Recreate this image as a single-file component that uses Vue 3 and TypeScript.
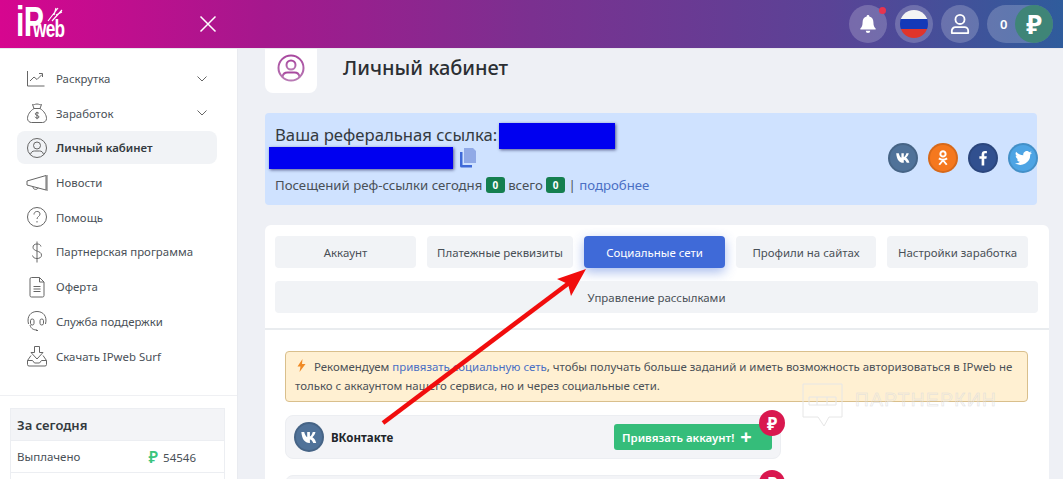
<script setup lang="ts">
const menu = [
  { label: 'Раскрутка', icon: 'chart', arrow: true },
  { label: 'Заработок', icon: 'bag', arrow: true },
  { label: 'Личный кабинет', icon: 'user', active: true },
  { label: 'Новости', icon: 'horn' },
  { label: 'Помощь', icon: 'help' },
  { label: 'Партнерская программа', icon: 'dollar' },
  { label: 'Оферта', icon: 'doc' },
  { label: 'Служба поддержки', icon: 'support' },
  { label: 'Скачать IPweb Surf', icon: 'download' },
]

const tabs = ['Аккаунт', 'Платежные реквизиты', 'Социальные сети', 'Профили на сайтах', 'Настройки заработка']
</script>

<template>
  <div class="page">
    <header class="topbar">
      <div class="logo">
        <span class="logo-ip">iP</span><span class="logo-web">web</span>
        <svg class="logo-leaf" width="16" height="16" viewBox="0 0 16 16" fill="none" stroke="#fff" stroke-width="1.200">
          <path d="M1 15L11 2M5 15L15 4M7 9l2-7M9 9l6-3" />
        </svg>
      </div>
      <button class="close" aria-label="Закрыть">
        <svg width="18" height="18" viewBox="0 0 18 18" fill="none" stroke="#fff" stroke-width="1.500">
          <path d="M1.500 1.500l15 15M16.500 1.500l-15 15" />
        </svg>
      </button>
      <div class="top-actions">
        <span class="round">
          <svg width="18" height="20" viewBox="0 0 20 22" fill="#fff">
            <path d="M10 1a1.500 1.500 0 0 1 1.500 1.600C14.600 3.300 16 5.800 16 9c0 4 1 5.500 2.500 7v1h-17v-1C3 14.500 4 13 4 9c0-3.200 1.400-5.700 4.500-6.400A1.500 1.500 0 0 1 10 1zM7.500 18.500h5a2.500 2.500 0 0 1-5 0z" />
          </svg>
          <i class="dot"></i>
        </span>
        <span class="round">
          <span class="flag"><i class="w"></i><i class="b"></i><i class="r"></i></span>
        </span>
        <span class="round">
          <svg width="20" height="22" viewBox="0 0 22 24" fill="none" stroke="#fff" stroke-width="2">
            <circle cx="11" cy="7" r="5" />
            <path d="M2 22v-2.500a4 4 0 0 1 4-4h10a4 4 0 0 1 4 4V22z" stroke-linejoin="round" />
          </svg>
        </span>
        <span class="balance">
          <span class="balance-num">0</span>
          <span class="balance-cur">₽</span>
        </span>
      </div>
    </header>

    <div class="body">
      <aside class="sidebar">
        <nav class="menu">
          <a v-for="item in menu" :key="item.label" class="menu-item" :class="{ active: item.active }">
            <svg class="menu-icon" width="22" height="22" viewBox="0 0 22 22" fill="none" stroke="#666" stroke-width="1">
              <template v-if="item.icon === 'chart'">
                <path d="M1.500 3v15h17" />
                <path d="M4 13l4-4 3 2.500 5-5M13 5.500h3.500V9" />
              </template>
              <template v-else-if="item.icon === 'bag'">
                <path d="M8 6.500L6.500 2.500c1.500.7 2.500-.5 4.500-.5s3 1.200 4.500.5L14 6.500z" />
                <path d="M8 6.500C4 9 1.500 13 1.500 16.500c0 2.500 2 4 4 4h11c2 0 4-1.500 4-4C20.500 13 18 9 14 6.500" />
                <path d="M13 11.500c-.5-1-3.500-1.500-3.700.3-.2 2 3.900 1.200 3.700 3.200-.2 1.700-3.300 1.500-4-.2M11 9.800v7.400" />
              </template>
              <template v-else-if="item.icon === 'user'">
                <circle cx="11" cy="11" r="9.500" />
                <circle cx="11" cy="8.500" r="3.500" />
                <path d="M4.500 17.500c.5-2.500 2-3.500 4-3.500h5c2 0 3.500 1 4 3.500" />
              </template>
              <template v-else-if="item.icon === 'horn'">
                <path d="M1 9v4l19 5V3.500zM21 3v16" />
                <path d="M7 15c0 3 4.500 3 5 .8" />
              </template>
              <template v-else-if="item.icon === 'help'">
                <circle cx="11" cy="11" r="9.500" />
                <path d="M8 8.500c0-4 6-4 6-.5 0 2.500-3 2.500-3 5M11 15v1.500" />
              </template>
              <template v-else-if="item.icon === 'dollar'">
                <path d="M15 5.500C14.500 3.500 13 3 11 3 8.500 3 7 4.300 7 6.200c0 4.800 8.500 3 8.500 8 0 2.200-2 3.300-4.500 3.300-2.300 0-4-1-4.500-3M11 .5v21" />
              </template>
              <template v-else-if="item.icon === 'doc'">
                <path d="M4 3a1.500 1.500 0 0 1 1.500-1.500h8L18 6v13.500a1.500 1.500 0 0 1-1.500 1.500h-11A1.500 1.500 0 0 1 4 19.500zM13.500 1.500V6H18M7.500 10.500h7M7.500 13h7M7.500 15.500h7" />
              </template>
              <template v-else-if="item.icon === 'support'">
                <path d="M2.500 14C.5 6 5 1.500 11 1.500S21.500 6 19.500 14" />
                <rect x="4.500" y="9" width="3.500" height="6" rx="1.700" />
                <rect x="14" y="9" width="3.500" height="6" rx="1.700" />
                <path d="M4 15c1 4 4 5 7 5M12 20.500h-2" />
              </template>
              <template v-else>
                <path d="M8.500 1.500h5v6h3.500L11 14 5 7.500h3.500z" />
                <path d="M5 10.500l-3.500 5v4a1.500 1.500 0 0 0 1.500 1.500h16a1.500 1.500 0 0 0 1.500-1.500v-4l-3.500-5M1.500 15.500h5l2 2.500h5l2-2.500h5" />
              </template>
            </svg>
            <span class="menu-label">{{ item.label }}</span>
            <svg v-if="item.arrow" class="menu-arrow" width="10" height="6" viewBox="0 0 10 6" fill="none" stroke="#666" stroke-width="1">
              <path d="M.5.500L5 5 9.500.5" />
            </svg>
          </a>
        </nav>
        <div class="today">
          <div class="today-head">За сегодня</div>
          <div class="today-row">
            <span>Выплачено</span>
            <span class="today-value"><b>₽</b>54546</span>
          </div>
          <div class="today-row"></div>
        </div>
      </aside>

      <main class="content">
        <div class="title-row">
          <span class="title-icon">
            <svg width="28" height="28" viewBox="0 0 28 28" fill="none" stroke="url(#titleGrad)" stroke-width="2">
              <defs>
                <linearGradient id="titleGrad" x1="0" y1="0" x2="0" y2="1">
                  <stop offset="0" stop-color="#a8489f" />
                  <stop offset="1" stop-color="#b879b4" />
                </linearGradient>
              </defs>
              <circle cx="14" cy="14" r="12.500" />
              <circle cx="14" cy="11" r="4.500" />
              <path d="M5.500 23c.5-3.500 2.500-4.500 5-4.500h7c2.500 0 4.500 1 5 4.500" />
            </svg>
          </span>
          <h1>Личный кабинет</h1>
        </div>

        <section class="ref-card">
          <div class="ref-main">
            <div class="ref-link">Ваша реферальная ссылка: <span class="hidden-a"></span></div>
            <div class="ref-second">
              <span class="hidden-b"></span>
              <svg width="18" height="20" viewBox="0 0 18 20">
                <path d="M5 0h9l3 3v12H5z" fill="#90a9e6" />
                <path d="M1 4h2.500v13H13v2.500H2.500A1.500 1.500 0 0 1 1 18z" fill="#3f6ad8" />
              </svg>
            </div>
            <div class="ref-stats">
              Посещений реф-ссылки сегодня <span class="badge">0</span> всего <span class="badge">0</span> | <a>подробнее</a>
            </div>
          </div>
          <div class="socials">
            <span class="soc vk"><svg width="16" height="10" viewBox="0 0 20 12" fill="#fff"><path d="M0 0h3.200c.6 2.800 2 5 3.300 5.700V0h3v4.800C10.800 4.600 12 2.500 12.700 0h3c-.5 2.700-2.200 4.800-3.400 5.700 1.300.7 3.300 2.700 4.200 6.300h-3.300c-.7-2.200-2.300-3.700-3.700-3.900V12H8.800C4 12 .600 8.300 0 0z" transform="translate(1.500)"/></svg></span>
            <span class="soc ok"><svg width="12" height="18" viewBox="0 0 16 22" fill="none" stroke="#fff" stroke-width="2.600"><circle cx="8" cy="5.500" r="3.500"/><path d="M2.500 11.500c3 2 8 2 11 0M8 13.500V15M8 14l-5 6M8 14l5 6"/></svg></span>
            <span class="soc fb"><svg width="9" height="16" viewBox="0 0 12 20" fill="#fff"><path d="M3.500 20v-9H.5V7.500h3V5c0-3 1.800-4.500 4.400-4.500 1.300 0 2.300.1 2.600.1v3.100H8.700c-1.400 0-1.700.7-1.700 1.700v2.100h3.400l-.5 3.500H7V20z"/></svg></span>
            <span class="soc tw"><svg width="17" height="14" viewBox="0 0 22 18" fill="#fff"><path d="M22 2.100c-.8.400-1.700.6-2.600.7.900-.6 1.600-1.400 2-2.500-.9.500-1.800.9-2.900 1.100A4.500 4.500 0 0 0 10.800 5.500 12.800 12.800 0 0 1 1.500.8a4.500 4.500 0 0 0 1.400 6c-.7 0-1.400-.2-2-.6 0 2.200 1.500 4 3.600 4.500-.7.200-1.300.2-2 .1.600 1.800 2.200 3.100 4.200 3.100A9 9 0 0 1 0 15.800 12.800 12.800 0 0 0 19.700 4.500c.9-.6 1.700-1.400 2.300-2.400z"/></svg></span>
          </div>
        </section>

        <section class="panel">
          <div class="tabs">
            <a v-for="tab in tabs" :key="tab" class="tab" :class="{ current: tab === 'Социальные сети', wide: tab === 'Платежные реквизиты' }">{{ tab }}</a>
            <a class="tab full">Управление рассылками</a>
          </div>
          <div class="panel-body">
            <div class="alert"><svg width="9" height="13" viewBox="0 0 9 13" fill="#f08a24"><path d="M5.500 0L.5 7.500h3L2.500 13l6-8h-3.500z"/></svg>Рекомендуем <a>привязать социальную сеть</a>, чтобы получать больше заданий и иметь возможность авторизоваться в IPweb не только с аккаунтом нашего сервиса, но и через социальные сети.</div>
            <div class="net">
              <span class="soc vk"><svg width="18" height="11" viewBox="0 0 20 12" fill="#fff"><path d="M0 0h3.200c.6 2.800 2 5 3.300 5.700V0h3v4.800C10.800 4.600 12 2.500 12.700 0h3c-.5 2.700-2.200 4.800-3.400 5.700 1.300.7 3.300 2.700 4.200 6.300h-3.300c-.7-2.200-2.300-3.700-3.700-3.900V12H8.800C4 12 .600 8.300 0 0z" transform="translate(1.500)"/></svg></span>
              <b class="net-name">ВКонтакте</b>
              <a class="bind">Привязать аккаунт! <span class="plus">+</span></a>
              <span class="ruble">₽</span>
            </div>
            <div class="net"><span class="ruble">₽</span></div>
          </div>
        </section>
      </main>
    </div>

    <svg class="arrow" width="1063" height="479" viewBox="0 0 1063 479">
      <path d="M383 423L569 283" stroke="#f10d0d" stroke-width="4.500" fill="none" />
      <path d="M586 269L557 279L568 284L571 296z" fill="#f10d0d" />
    </svg>

    <div class="watermark">
      <svg width="41" height="44" viewBox="0 0 41 44" fill="none" stroke="#e6e6e6" stroke-width="1">
        <path d="M1 1h39v33H27l-5 9-6-9H1z" />
        <path d="M7 14h27v8H7zM15 14v8M25 14v8" />
      </svg>
      <span>ПАРТНЕРКИН</span>
    </div>
  </div>
</template>

<style scoped>
.page {
  position: relative;
  width: 1063px;
  height: 479px;
  overflow: hidden;
  background: #eef0f5;
  font-family: "Noto Sans", "Open Sans", sans-serif;
  color: #495057;
}

.topbar {
  height: 48px;
  display: flex;
  align-items: center;
  background: linear-gradient(90deg, #d6068f 0%, #a5188d 25%, #7b3090 50%, #5a4396 78%, #2f5c9c 100%);
  border-bottom: 1px solid #e8e8ee;
  box-sizing: content-box;
}

.logo {
  position: relative;
  width: 199px;
  padding-left: 16px;
  box-sizing: border-box;
  display: flex;
  align-items: flex-end;
  height: 37px;
  margin-top: -5px;
  color: #fff;
  font-family: "Liberation Sans", sans-serif;
  font-weight: 700;
}

.logo-ip {
  font-size: 42px;
  line-height: 37px;
  height: 37px;
  letter-spacing: -1px;
  transform: scaleX(0.72);
  transform-origin: left bottom;
  margin-right: -21px;
}

.logo-web {
  font-size: 24px;
  line-height: 22px;
  letter-spacing: -1px;
  transform: scaleX(0.72);
  transform-origin: left bottom;
}

.logo-leaf {
  position: absolute;
  left: 47px;
  top: 3px;
}

.close {
  padding: 0;
  border: 0;
  background: none;
  display: flex;
}

.top-actions {
  margin-left: auto;
  margin-right: 10px;
  display: flex;
  align-items: center;
  gap: 8px;
}

.round {
  position: relative;
  width: 38px;
  height: 38px;
  border-radius: 50%;
  background: rgba(255, 255, 255, 0.2);
  display: flex;
  align-items: center;
  justify-content: center;
}

.dot {
  position: absolute;
  top: 2px;
  right: 1px;
  width: 7px;
  height: 7px;
  border-radius: 50%;
  background: #e7344f;
}

.flag {
  width: 28px;
  height: 28px;
  border-radius: 50%;
  overflow: hidden;
  display: flex;
  flex-direction: column;
}

.flag i {
  flex: 1;
}

.flag .w { background: #f4f4f4; }
.flag .b { background: #1339b8; }
.flag .r { background: #e0352b; }

.balance {
  width: 66px;
  height: 38px;
  border-radius: 19px;
  background: rgba(255, 255, 255, 0.2);
  display: flex;
  align-items: center;
  justify-content: space-between;
  padding-left: 13px;
  box-sizing: border-box;
  color: #fff;
}

.balance-num {
  font-size: 13px;
  font-weight: 600;
}

.balance-cur {
  width: 38px;
  height: 38px;
  border-radius: 50%;
  background: #3f8577;
  display: flex;
  align-items: center;
  justify-content: center;
  font-size: 26px;
  font-weight: 700;
}

.body {
  display: flex;
}

.sidebar {
  width: 238px;
  height: 431px;
  flex: none;
  background: #fff;
  border-right: 1px solid #e9ebf0;
  box-sizing: border-box;
}

.menu {
  padding: 13px 20px 21px 17px;
  border-bottom: 1px solid #eff0f3;
  height: 347px;
  box-sizing: border-box;
}

.menu-item {
  height: 33px;
  margin-bottom: 1.700px;
  padding: 0 10px 0 9px;
  display: flex;
  align-items: center;
  border-radius: 8px;
  font-size: 11.400px;
  color: #495057;
}

.menu-item.active {
  background: #f1f3f6;
  font-weight: 600;
  color: #343a40;
}

.menu-icon {
  flex: none;
  margin-right: 8px;
}

.menu-arrow {
  margin-left: auto;
}

.today {
  margin: 12px 12px 0 10px;
  border: 1px solid #eceef2;
}

.today-head {
  height: 31px;
  padding-left: 6px;
  display: flex;
  align-items: center;
  background: #f3f4f7;
  border-bottom: 1px solid #eceef2;
  font-size: 13px;
  font-weight: 600;
  color: #343a40;
}

.today-row {
  height: 31px;
  padding: 0 28px 0 6px;
  display: flex;
  align-items: center;
  justify-content: space-between;
  border-bottom: 1px solid #eceef2;
  font-size: 11.500px;
}

.today-value b {
  margin-right: 5px;
  color: #3ac47d;
  font-size: 16px;
  font-weight: 600;
  line-height: 16px;
  vertical-align: -1px;
}

.content {
  flex: 1;
  padding: 0 14px 0 27px;
  min-width: 0;
}

.title-row {
  height: 44px;
  display: flex;
  gap: 26px;
  margin-bottom: 20px;
}

.title-icon {
  width: 52px;
  height: 44px;
  padding-bottom: 6px;
  box-sizing: border-box;
  border-radius: 0 0 8px 8px;
  background: #fff;
  display: flex;
  align-items: center;
  justify-content: center;
}

h1 {
  margin: 0;
  font-size: 20px;
  line-height: 38px;
  font-weight: 500;
  color: #2b2f33;
}

.ref-card {
  height: 92px;
  padding: 10px 10px 0 10px;
  width: 772px;
  box-sizing: border-box;
  border-radius: 4px;
  background: #cfe2ff;
  display: flex;
  justify-content: space-between;
  margin-bottom: 20px;
}

.ref-link {
  display: flex;
  gap: 2px;
  height: 24px;
  font-size: 16.700px;
  line-height: 24px;
  font-weight: 400;
  color: #343a40;
}

.hidden-a {
  width: 116px;
  height: 26px;
  background: #0000f0;
  box-shadow: 1px 1px 3px rgba(0, 0, 60, 0.6);
}

.ref-second {
  display: flex;
  align-items: center;
  gap: 6px;
  margin-left: -6px;
  height: 22px;
}

.hidden-b {
  width: 184px;
  height: 22px;
  background: #0000f0;
  box-shadow: 1px 1px 3px rgba(0, 0, 60, 0.6);
}

.ref-stats {
  margin-top: 7px;
  font-size: 13.200px;
  line-height: 18px;
  color: #495057;
}

.ref-stats a {
  color: #4a6fc4;
}

.badge {
  display: inline-block;
  width: 19px;
  height: 16px;
  border-radius: 3px;
  background: #157f50;
  color: #fff;
  font-size: 10px;
  line-height: 16px;
  font-weight: 700;
  text-align: center;
  vertical-align: 1px;
}

.socials {
  display: flex;
  gap: 10px;
  margin-top: 20px;
  margin-right: -11px;
}

.soc {
  width: 30px;
  height: 30px;
  flex: none;
  box-sizing: border-box;
  border-radius: 50%;
  border: 2px solid rgba(0, 0, 0, 0.12);
  display: flex;
  align-items: center;
  justify-content: center;
}

.vk { background: #507299; }
.ok { background: #f5781e; }
.fb { background: #31508f; }
.tw { background: #4da4e4; }

.panel {
  width: 784px;
  height: 260px;
  border-radius: 6px 6px 0 0;
  background: #fff;
}

.tabs {
  padding: 11px 11px 15px 10px;
  display: flex;
  flex-wrap: wrap;
  gap: 13px 11px;
  border-bottom: 2px solid #e9ecef;
}

.tab {
  width: 141px;
  height: 32px;
  box-sizing: border-box;
  border-radius: 4px;
  background: #f1f3f6;
  display: flex;
  align-items: center;
  justify-content: center;
  font-size: 11.450px;
  color: #495057;
}

.tab:nth-child(4) {
  width: 140px;
}

.tab.wide {
  width: 146px;
}

.tab.current {
  background: #3f6ad8;
  color: #fff;
  box-shadow: 0 4px 12px rgba(63, 106, 216, 0.45);
}

.tab.full {
  width: 763px;
}

.panel-body {
  padding: 21px 21px 0 20px;
}

.alert {
  padding: 6px 9px;
  height: 51px;
  box-sizing: border-box;
  border: 1px solid #d9bf8c;
  border-radius: 4px;
  background: #fff0d2;
  font-size: 11.450px;
  line-height: 18.500px;
  color: #4b5157;
}

.alert svg {
  margin: 0 8px 0 2px;
  vertical-align: -1px;
}

.alert a {
  color: #4a6fc4;
}

.net {
  position: relative;
  width: 496px;
  height: 44px;
  margin-top: 16px;
  padding: 0 8px;
  box-sizing: border-box;
  border: 1px solid #eceef2;
  border-radius: 8px;
  background: #f3f4f7;
  display: flex;
  align-items: center;
}

.alert + .net {
  margin-top: 13px;
}

.net-name {
  margin-left: 7px;
  font-size: 11.500px;
  color: #212529;
}

.bind {
  margin-left: auto;
  width: 158px;
  height: 26px;
  box-sizing: border-box;
  padding-left: 8px;
  border-radius: 3px;
  background: #35bd7a;
  color: #fff;
  display: flex;
  align-items: center;
  gap: 6px;
  font-size: 11.400px;
  font-weight: 600;
}

.plus {
  font-size: 20px;
  line-height: 18px;
  font-weight: 700;
}

.ruble {
  position: absolute;
  top: -6px;
  right: -5px;
  width: 26px;
  height: 26px;
  border-radius: 50%;
  background: #d9184f;
  color: #fff;
  font-size: 17px;
  font-weight: 700;
  display: flex;
  align-items: center;
  justify-content: center;
}

.arrow {
  position: absolute;
  top: 0;
  left: 0;
  pointer-events: none;
}

.watermark {
  position: absolute;
  left: 802px;
  top: 383px;
  display: flex;
  gap: 12px;
  color: transparent;
  font-size: 19px;
  letter-spacing: 1.500px;
  -webkit-text-stroke: 0.5px #dedede;
  font-family: "Liberation Sans", sans-serif;
}

.watermark span {
  line-height: 24px;
  margin-top: 5px;
}
</style>
